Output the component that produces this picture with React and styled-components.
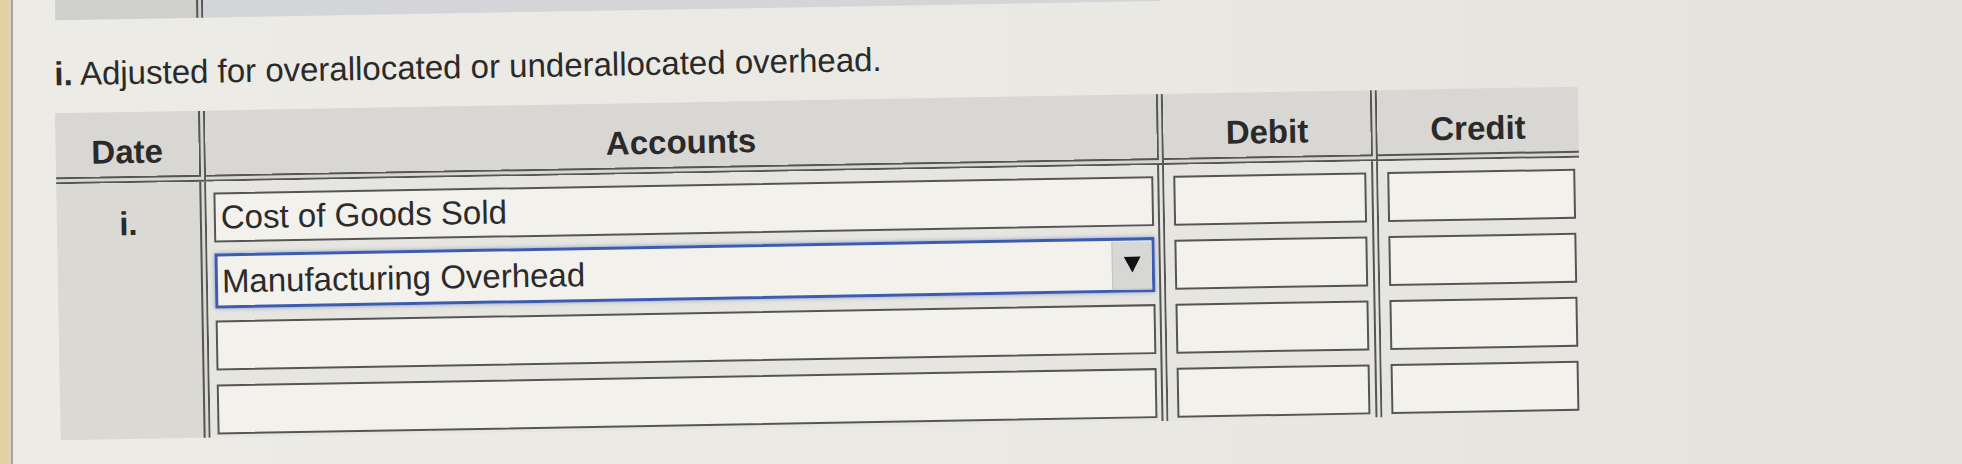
import React from "react";
import styled, { createGlobalStyle } from "styled-components";

const Global = createGlobalStyle`
  html, body { margin: 0; padding: 0; }
  body {
    width: 1962px;
    height: 464px;
    overflow: hidden;
    background: linear-gradient(90deg, #ecebe6 0%, #eae9e4 50%, #e5e2dd 100%);
    font-family: "Liberation Sans", Arial, sans-serif;
    color: #2b2b2b;
  }
`;

const Page = styled.div`
  display: flex;
  height: 464px;
`;

const EdgeStrip = styled.div`
  flex: none;
  width: 11px;
  background: linear-gradient(90deg, #e4d39f, #ddd2b2);
`;

const EdgeLine = styled.div`
  flex: none;
  width: 2px;
  background: #a3a3a0;
`;

const Sheet = styled.div`
  flex: 1;
  display: flex;
  flex-direction: column;
  align-items: flex-start;
  padding-left: 40px;
  transform: rotate(-1deg);
  transform-origin: 0 0;
`;

const PrevTable = styled.div`
  display: flex;
  width: 1105px;
  height: 21px;
  margin-left: 2px;
`;

const PrevDate = styled.div`
  width: 141px;
  background: #cfcfce;
  border-right: 7px double #555;
`;

const PrevRest = styled.div`
  flex: 1;
  background: #d3d5d9;
`;

const Title = styled.h2`
  margin: 34px 0 0;
  font-size: 33px;
  line-height: 40px;
  font-weight: 400;
  white-space: nowrap;
  color: #2a2a2a;
`;

const Strong = styled.b`
  font-weight: 700;
`;

const Table = styled.div`
  margin-top: 19px;
  display: grid;
  grid-template-columns: 150px 958px 214px 201px;
  grid-template-rows: 71px 256px;
`;

const HeadCell = styled.div`
  box-sizing: border-box;
  display: flex;
  align-items: flex-end;
  justify-content: center;
  padding-bottom: 6px;
  background: #d8d7d3;
  border-bottom: 7px double #555;
  border-right: ${(p) => (p.$last ? "none" : "7px double #555")};
  font-size: 33px;
  line-height: 36px;
  font-weight: 700;
  color: #2a2a2a;
`;

const BodyCol = styled.div`
  box-sizing: border-box;
  display: flex;
  flex-direction: column;
  gap: 14px;
  padding: ${(p) => p.$pad};
  background: ${(p) => (p.$shade ? "#dad9d4" : "#e6e5e0")};
  border-right: ${(p) => (p.$last ? "none" : "7px double #555")};
`;

const DateCol = styled(BodyCol)`
  align-items: center;
  padding-top: 23px;
  font-size: 33px;
  line-height: 36px;
  font-weight: 700;
  color: #2a2a2a;
`;

const Field = styled.div`
  box-sizing: border-box;
  flex: none;
  height: 50px;
  display: flex;
  align-items: center;
  padding-left: 5px;
  border: 2px solid #555;
  background: #f2f1ec;
  font-size: 33px;
  color: #2b2b2b;
  white-space: nowrap;
`;

const SelectBox = styled(Field)`
  height: 55px;
  margin: -3px 0 -2px;
  padding-left: 4px;
  justify-content: space-between;
  border: 3px solid #3d5cb0;
  box-shadow: 0 0 4px rgba(70, 100, 190, 0.55);
`;

const ArrowButton = styled.div`
  flex: none;
  width: 39px;
  height: 47px;
  display: flex;
  align-items: center;
  justify-content: center;
  background: #d7d7d5;
  border-left: 1px solid #c4c4c2;
  border-bottom: 1px solid #c9c9c7;
`;

const Arrow = () => (
  <svg width="17" height="16" viewBox="0 0 17 16">
    <polygon points="0,0 17,0 8.5,16" fill="#111" />
  </svg>
);

const accounts = ["Cost of Goods Sold", "Manufacturing Overhead", "", ""];

export default function App() {
  return (
    <>
      <Global />
      <Page>
        <EdgeStrip />
        <EdgeLine />
        <Sheet>
          <PrevTable>
            <PrevDate />
            <PrevRest />
          </PrevTable>
          <Title>
            <Strong>i.</Strong> Adjusted for overallocated or underallocated overhead.
          </Title>
          <Table>
            <HeadCell>Date</HeadCell>
            <HeadCell>Accounts</HeadCell>
            <HeadCell>Debit</HeadCell>
            <HeadCell $last>Credit</HeadCell>

            <DateCol $shade>i.</DateCol>
            <BodyCol $pad="11px 4px 3px 7px">
              {accounts.map((a, i) =>
                i === 1 ? (
                  <SelectBox key={i}>
                    {a}
                    <ArrowButton>
                      <Arrow />
                    </ArrowButton>
                  </SelectBox>
                ) : (
                  <Field key={i}>{a}</Field>
                )
              )}
            </BodyCol>
            <BodyCol $pad="11px 5px 3px 9px">
              {accounts.map((_, i) => (
                <Field key={i} />
              ))}
            </BodyCol>
            <BodyCol $pad="11px 4px 3px 9px" $last>
              {accounts.map((_, i) => (
                <Field key={i} />
              ))}
            </BodyCol>
          </Table>
        </Sheet>
      </Page>
    </>
  );
}
